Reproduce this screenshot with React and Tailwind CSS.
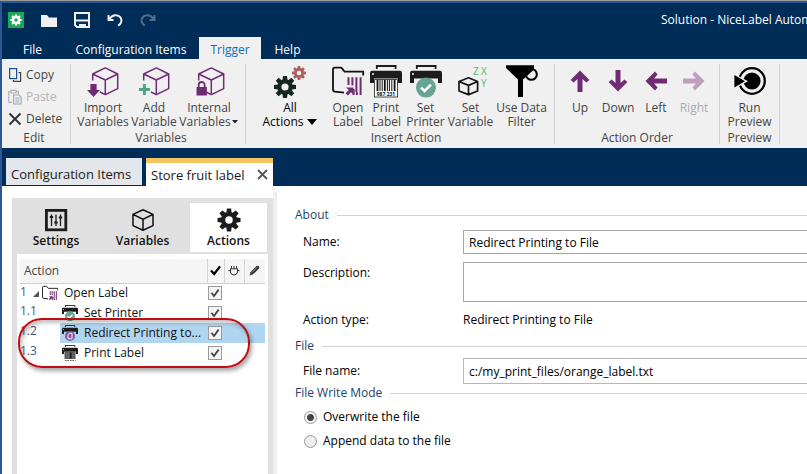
import { useState } from 'react';

const PURPLE = '#6f2c74';

/* ---------- Icons ---------- */

function Gear({ cx, cy, r, color, hole = '#f0f0f0' }) {
  return (
    <g transform={`translate(${cx} ${cy}) scale(${r / 12})`}>
      {[0, 45, 90, 135, 180, 225, 270, 315].map((angle) => (
        <path key={angle} d="M-2.8 -7 L-2.2 -12 L2.2 -12 L2.8 -7 Z" fill={color} transform={`rotate(${angle})`} />
      ))}
      <circle r="8.4" fill={color} />
      <circle r="3.9" fill={hole} />
    </g>
  );
}

function RibbonSvg({ children }) {
  return (
    <svg width="32" height="32" viewBox="0 0 32 32" fill="none" className="shrink-0 overflow-visible">
      {children}
    </svg>
  );
}

function CutCube() {
  return (
    <path
      d="M5.7 15.5 V9 L18.3 2.9 L30.7 9 V23.6 L18.3 29.6 L13 27 M5.7 9 L18.3 15 L30.7 9 M18.3 15 V29.6"
      stroke={PURPLE}
      strokeWidth="1.5"
      strokeLinejoin="round"
    />
  );
}

function ImportIcon() {
  return (
    <RibbonSvg>
      <CutCube />
      <path d="M3.4 19 H9.6 V25 H13 L6.5 32 L0 25 H3.4 Z" fill={PURPLE} />
    </RibbonSvg>
  );
}

function AddIcon() {
  return (
    <RibbonSvg>
      <CutCube />
      <path d="M6.4 19 V30 M1 24.5 H12" stroke="#4da585" strokeWidth="3" />
    </RibbonSvg>
  );
}

function InternalIcon() {
  return (
    <RibbonSvg>
      <CutCube />
      <path d="M5.7 23 V20 a3 3 0 0 1 6 0 V23" stroke={PURPLE} strokeWidth="1.8" />
      <rect x="3.5" y="22" width="10.4" height="8.5" fill={PURPLE} />
    </RibbonSvg>
  );
}

function AllActionsIcon() {
  return (
    <RibbonSvg>
      <Gear cx={11} cy={22} r={11} color="#14261f" />
      <Gear cx={25} cy={8} r={7} color="#ad5f60" />
    </RibbonSvg>
  );
}

function OpenLabelArt() {
  return (
    <>
      <path
        d="M12 27.6 L2.8 26.6 Q1 26.4 1 24.5 V4.6 Q1 2.7 3 2.7 H8.6 Q9.6 2.7 10.2 3.6 L12.6 6.7 H31.2 V10.5"
        stroke="#111"
        strokeWidth="1.8"
      />
      <path d="M16.5 12.3 V20 M20.4 12.3 V20.5 M24.4 12.3 V27 M28.6 12.3 V30 M21.6 24 V30 M24.8 27 V30" stroke={PURPLE} strokeWidth="2" />
      <path d="M14 22.4 H21.4 V29.6 L19 27.2 L15.8 30.4 L13.6 28.2 L16.8 25 Z" fill={PURPLE} />
    </>
  );
}

function PrinterBody() {
  return (
    <>
      <path d="M6.8 4 V1 H25.6 V4" stroke="#1c1c1c" strokeWidth="1.8" />
      <path d="M2 5.7 H30 Q32 5.7 32 8 V18 H28 V13.6 H4 V18 H0 V8 Q0 5.7 2 5.7 Z" fill="#1c1c1c" />
      <circle cx="3" cy="9" r="1" fill="#f0f0f0" />
    </>
  );
}

function BarcodeArt() {
  return (
    <>
      <rect x="4.6" y="14.6" width="22.8" height="17.4" fill="#fff" stroke="#1c1c1c" strokeWidth="0.8" />
      <path d="M7.5 15 V26 M14.8 15 V26 M24.6 15 V26" stroke="#111" strokeWidth="1.8" />
      <path d="M10 15 V26 M12.2 15 V26 M17.4 15 V26 M19.4 15 V26 M21.8 15 V26" stroke="#111" strokeWidth="1" />
    </>
  );
}

function PrintLabelIcon() {
  return (
    <RibbonSvg>
      <PrinterBody />
      <BarcodeArt />
      <text x="16" y="31" textAnchor="middle" fontSize="5" fontWeight="700" fill="#111">987 231</text>
    </RibbonSvg>
  );
}

function SetPrinterArt() {
  return (
    <>
      <PrinterBody />
      <circle cx="16" cy="22.6" r="10" fill="#66a593" />
      <path d="M11 22.6 L14.6 26 L21 19.6" stroke="#fff" strokeWidth="2.6" />
    </>
  );
}

function SetVariableIcon() {
  return (
    <RibbonSvg>
      <path
        d="M4 16.5 L13.5 12.8 L22.6 16.5 V26 L13.5 29.6 L4 26 Z M4 16.5 L13.5 20.4 L22.6 16.5 M13.5 20.4 V29.6"
        stroke="#161616"
        strokeWidth="1.7"
        strokeLinejoin="round"
      />
      <g fill="#56b56c" fontSize="10">
        <text x="18" y="10">Z</text>
        <text x="26" y="10">X</text>
        <text x="26" y="22">Y</text>
      </g>
    </RibbonSvg>
  );
}

function FilterIcon() {
  return (
    <RibbonSvg>
      <path d="M0 0.3 H28 V4.6 L17 14.6 V32 H12 V14.6 L0 3 Z" fill="#000" />
      <circle cx="25.4" cy="9.4" r="5.4" stroke="#000" strokeWidth="2" />
    </RibbonSvg>
  );
}

function ArrowIcon({ angle }) {
  return (
    <RibbonSvg>
      <g transform={`rotate(${angle} 16 16)`}>
        <path d="M16 5.5 L25.4 15 L22.4 17.6 L18.5 14 V27 H13.5 V14 L9.6 17.6 L6.6 15 Z" fill={PURPLE} />
      </g>
    </RibbonSvg>
  );
}

function RunIcon() {
  return (
    <RibbonSvg>
      <circle cx="18" cy="16" r="12.8" stroke="#000" strokeWidth="2.2" />
      <circle cx="18" cy="16" r="8.6" fill="#000" />
      <path d="M-1 8 L14 16.3 L-1 24.6 Z" fill="#f0f0f0" />
      <path d="M0.4 10 L11 16.3 L0.4 22.6 Z" fill="#000" />
    </RibbonSvg>
  );
}

function CubeIcon() {
  return (
    <svg width="24" height="24" viewBox="0 0 24 24" fill="none">
      <path
        d="M12 1.8 L22 6.4 V17.6 L12 22.2 L2 17.6 V6.4 Z M2 6.4 L12 11.2 L22 6.4 M12 11.2 V22.2"
        stroke="#111"
        strokeWidth="1.5"
        strokeLinejoin="round"
      />
    </svg>
  );
}

function SlidersIcon() {
  return (
    <svg width="24" height="24" viewBox="0 0 24 24" fill="none" stroke="#1c1c1c">
      <rect x="2.4" y="2.4" width="19.4" height="19.4" strokeWidth="2.8" />
      <path d="M7.5 6.5 V18 M12 6.5 V18 M16.5 6.5 V18" strokeWidth="1.3" />
      <path d="M5.8 9 H9.2 M10.3 14.5 H13.7 M14.8 9.5 H18.2" strokeWidth="2" />
    </svg>
  );
}

function GearIcon() {
  return (
    <svg width="24" height="24" viewBox="0 0 24 24">
      <Gear cx={12} cy={12} r={11.5} color="#1c1c1c" hole="#fff" />
    </svg>
  );
}

function SmallIcon({ kind }) {
  return (
    <svg width="16" height="16" viewBox="0 0 32 32" fill="none" className="shrink-0">
      {kind === 'open' && <OpenLabelArt />}
      {kind === 'set' && <SetPrinterArt />}
      {kind === 'redirect' && (
        <>
          <PrinterBody />
          <circle cx="16" cy="22" r="10" fill="#84509c" />
          <path d="M12 27.5 V19 L15 16.5 H20 V27.5 Z" stroke="#fff" strokeWidth="2" />
        </>
      )}
      {kind === 'print' && (
        <>
          <PrinterBody />
          <rect x="5" y="13" width="22" height="15" fill="#555" />
          <path d="M9 15 V27 M13 15 V27 M22 15 V27" stroke="#777" strokeWidth="1.6" />
          <path d="M17.5 15 V27" stroke="#111" strokeWidth="2.4" />
          <path d="M6 31 H27" stroke="#555" strokeWidth="2" strokeDasharray="3 2" />
        </>
      )}
    </svg>
  );
}

/* ---------- Title bar ---------- */

const quickActions = [
  { label: 'Open', icon: <path d="M0 3 H6 L8 5.5 H16 V15 H0 Z" fill="#f0f0f0" /> },
  {
    label: 'Save',
    icon: (
      <>
        <path d="M1 1 H15 V15 H3 L1 13 Z" stroke="#f0f0f0" strokeWidth="2" />
        <path d="M1 8.5 H15" stroke="#f0f0f0" strokeWidth="2" />
        <path d="M5 15 V12 H12 V15 Z" fill="#f0f0f0" />
      </>
    ),
  },
  { label: 'Undo', icon: <path d="M1.5 3 V8 H6.5 M2 7.6 C5 2.5 11 2 13.4 5.4 C15.6 8.6 14 12 11 13.6" stroke="#f0f0f0" strokeWidth="2" /> },
  { label: 'Redo', disabled: true, icon: <path d="M14.5 3 V8 H9.5 M14 7.6 C11 2.5 5 2 2.6 5.4 C0.4 8.6 2 12 5 13.6" stroke="#4f6d8c" strokeWidth="2" /> },
];

function TitleBar() {
  return (
    <div className="flex h-[34px] items-center gap-[17px] pl-1.5 text-white">
      <svg width="16" height="16" viewBox="0 0 16 16" className="shrink-0">
        <rect width="16" height="16" fill="#1da75c" />
        <Gear cx={8} cy={8} r={5.6} color="#fff" hole="#1da75c" />
      </svg>
      {quickActions.map((action) => (
        <button key={action.label} aria-label={action.label} disabled={action.disabled} className="shrink-0">
          <svg width="16" height="16" viewBox="0 0 16 16" fill="none">{action.icon}</svg>
        </button>
      ))}
      <div className="ml-auto w-[146px] shrink-0 overflow-hidden whitespace-nowrap">Solution - NiceLabel Autom</div>
    </div>
  );
}

function MenuTabs() {
  return (
    <nav className="flex h-[22px] items-stretch text-white">
      <button className="w-[61px] pt-1">File</button>
      <button className="w-[136px] pt-1">Configuration Items</button>
      <button className="w-[62px] bg-[#f0f0f0] pt-1 text-[#0f6cbd]">Trigger</button>
      <button className="w-[53px] pt-1">Help</button>
    </nav>
  );
}

/* ---------- Ribbon ---------- */

function RibbonGroup({ title, className, children }) {
  return (
    <div className={`flex shrink-0 flex-col justify-between border-r border-[#d2d2d2] ${className}`}>
      <div className="flex pt-px">{children}</div>
      <div className="text-center leading-3">{title}</div>
    </div>
  );
}

function RibbonButton({ icon, lines, width, caret, disabled, className = '' }) {
  return (
    <button disabled={disabled} className={`flex flex-col items-center whitespace-nowrap leading-[14px] ${width} ${disabled ? 'opacity-40' : ''} ${className}`}>
      {icon}
      <span className="mt-1">{lines[0]}</span>
      {lines[1] && (
        <span className="flex items-center">
          {lines[1]}
          {caret}
        </span>
      )}
    </button>
  );
}

function Ribbon() {
  return (
    <div className="flex h-[89px] items-stretch overflow-hidden bg-[#f0f0f0] pt-[5px] pb-1 text-[#444]">
      <div className="flex w-[69px] shrink-0 flex-col justify-between border-r border-[#d2d2d2]">
        <div className="flex flex-col pl-1.5">
          <button className="flex h-[22px] items-center gap-1">
            <svg width="14" height="16" viewBox="0 0 14 16" fill="none" strokeWidth="1.2">
              <rect x="1.6" y="1.6" width="7" height="10" stroke="#1d4e89" />
              <path d="M10.5 5.6 H12.6 V14.4 H5.4 V13" stroke="#444" />
            </svg>
            Copy
          </button>
          <button disabled className="flex h-[22px] items-center gap-1 text-[#b4b4b4]">
            <svg width="14" height="16" viewBox="0 0 14 16" fill="none" strokeWidth="1.1">
              <path d="M4 13.4 H0.8 V2.6 H3 M8 2.6 H10.4 V5 M3 1.4 H8 V4 H3 Z" stroke="#b0b0b0" />
              <path d="M5.6 6 H11 L13.2 8.2 V15 H5.6 Z M7.4 9 H11.4 M7.4 11 H11.4 M7.4 13 H11.4" stroke="#93a9bd" />
            </svg>
            Paste
          </button>
          <button className="flex h-[22px] items-center gap-1">
            <svg width="14" height="16" viewBox="0 0 14 16" fill="none">
              <path d="M1.5 2.5 L12.5 13.5 M12.5 2.5 L1.5 13.5" stroke="#333" strokeWidth="1.9" />
            </svg>
            Delete
          </button>
        </div>
        <div className="pr-1 text-center leading-3">Edit</div>
      </div>

      <RibbonGroup title="Variables" className="w-[175px] pl-1.5">
        <RibbonButton icon={<ImportIcon />} lines={['Import', 'Variables']} width="w-[52px]" />
        <RibbonButton icon={<AddIcon />} lines={['Add', 'Variable']} width="w-[50px]" />
        <RibbonButton
          icon={<InternalIcon />}
          lines={['Internal', 'Variables']}
          width="w-[60px]"
          caret={<svg width="7" height="4" viewBox="0 0 7 4" className="ml-px"><path d="M0 0 H6 L3 3.4 Z" fill="#222" /></svg>}
        />
      </RibbonGroup>

      <RibbonGroup title="Insert Action" className="w-[309px] pl-3">
        <RibbonButton
          icon={<AllActionsIcon />}
          lines={['All', 'Actions']}
          width="w-[64px]"
          className="mr-[7px] text-black"
          caret={<svg width="10" height="6" viewBox="0 0 10 6" className="ml-1"><path d="M0 0 H10 L5 6 Z" fill="#000" /></svg>}
        />
        <RibbonButton icon={<RibbonSvg><OpenLabelArt /></RibbonSvg>} lines={['Open', 'Label']} width="w-[38px]" />
        <RibbonButton icon={<PrintLabelIcon />} lines={['Print', 'Label']} width="w-[38px]" />
        <RibbonButton icon={<RibbonSvg><SetPrinterArt /></RibbonSvg>} lines={['Set', 'Printer']} width="w-[41px]" />
        <RibbonButton icon={<SetVariableIcon />} lines={['Set', 'Variable']} width="w-[49px]" />
        <RibbonButton icon={<FilterIcon />} lines={['Use Data', 'Filter']} width="w-[53px]" />
      </RibbonGroup>

      <RibbonGroup title="Action Order" className="w-[165px] px-1.5">
        <RibbonButton icon={<ArrowIcon angle={0} />} lines={['Up']} width="w-[38px]" />
        <RibbonButton icon={<ArrowIcon angle={180} />} lines={['Down']} width="w-[38px]" />
        <RibbonButton icon={<ArrowIcon angle={270} />} lines={['Left']} width="w-[38px]" />
        <RibbonButton icon={<ArrowIcon angle={90} />} lines={['Right']} width="w-[38px]" disabled />
      </RibbonGroup>

      <RibbonGroup title="Preview" className="w-[60px]">
        <RibbonButton icon={<RunIcon />} lines={['Run', 'Preview']} width="w-full" />
      </RibbonGroup>
    </div>
  );
}

/* ---------- Document tabs ---------- */

function DocumentTabs() {
  return (
    <div className="flex h-[38px] items-end gap-1 pl-1 text-[13px] text-[#1a1a1a]">
      <button className="mb-px h-[27px] w-[136px] whitespace-nowrap bg-[#e3e7eb] px-[5px] pt-1 text-left">Configuration Items</button>
      <div className="flex h-[28px] w-[127px] items-center justify-between whitespace-nowrap border-t-[5px] border-[#f5c564] bg-white px-[5px]">
        <button>Store fruit label</button>
        <button aria-label="Close">
          <svg width="11" height="11" viewBox="0 0 11 11">
            <path d="M1 1 L10 10 M10 1 L1 10" stroke="#555" strokeWidth="1.8" />
          </svg>
        </button>
      </div>
    </div>
  );
}

/* ---------- Action tree ---------- */

const actions = [
  { id: '1', name: 'Open Label', icon: 'open', root: true },
  { id: '1.1', name: 'Set Printer', icon: 'set' },
  { id: '1.2', name: 'Redirect Printing to...', icon: 'redirect' },
  { id: '1.3', name: 'Print Label', icon: 'print' },
];

function CheckBox({ label }) {
  return (
    <span className="grid size-[14px] place-items-center">
      <input
        type="checkbox"
        defaultChecked
        aria-label={label}
        className="peer col-start-1 row-start-1 size-[14px] appearance-none border border-[#9a9a9a] bg-[#f4f4f4]"
      />
      <svg width="10" height="10" viewBox="0 0 10 10" fill="none" className="pointer-events-none invisible col-start-1 row-start-1 peer-checked:visible">
        <path d="M1.4 4.8 L4 8 L8.6 1.6" stroke="#444" strokeWidth="1.8" />
      </svg>
    </span>
  );
}

function ActionTree() {
  const [selected, setSelected] = useState('1.2');

  return (
    <div className="relative flex-1 bg-white px-[3px] pt-[5px]">
      <table className="w-full table-fixed border-collapse">
        <colgroup>
          <col className="w-[40px]" />
          <col />
          <col className="w-[17px]" />
          <col className="w-[20px]" />
          <col className="w-[21px]" />
        </colgroup>
        <thead>
          <tr className="h-6 border-b border-[#cfcfcf] bg-[#f5f5f5] text-left text-[#444]">
            <th colSpan={2} className="pl-1 font-normal">Action</th>
            <th className="border-l border-[#d5d5d5]">
              <svg width="11" height="11" viewBox="0 0 11 11" fill="none" className="mx-auto">
                <path d="M1 5.5 L4.2 9 L10 1.4" stroke="#000" strokeWidth="2.3" />
              </svg>
            </th>
            <th className="border-l border-[#d5d5d5]">
              <svg width="12" height="12" viewBox="0 0 12 12" fill="none" stroke="#333" className="mx-auto">
                <path d="M2.5 3.8 H9.5 V7 Q9 10 6 10 Q3 10 2.5 7 Z M0.4 5.6 H2.5 M9.5 5.6 H11.6 M3.5 1 V3.8 M6 1 V3.8 M8.5 1 V3.8" />
              </svg>
            </th>
            <th className="border-l border-[#d5d5d5]">
              <svg width="11" height="11" viewBox="0 0 11 11" className="mx-auto">
                <path d="M0.6 10.4 L1.4 7.2 L7.6 1 Q8.6 0.2 9.8 1.2 Q10.8 2.4 10 3.4 L3.8 9.6 Z" fill="#333" />
                <path d="M2.8 7.6 L8 2.4 M1.6 8.4 L2.6 9.4" stroke="#bbb" strokeWidth="0.7" />
              </svg>
            </th>
          </tr>
        </thead>
        <tbody>
          {actions.map((action) => {
            const highlight = selected === action.id ? 'bg-[#afd5f0]' : '';
            return (
              <tr key={action.id} className="h-5 cursor-default" onClick={() => setSelected(action.id)}>
                <td className="align-top leading-4 text-[#4c5a73]">
                  <div className="flex items-center justify-between">
                    {action.id}
                    {action.root && (
                      <svg width="6" height="6" viewBox="0 0 6 6" className="mt-1 mr-[21px]">
                        <path d="M6 0 V6 H0 Z" fill="#555" />
                      </svg>
                    )}
                  </div>
                </td>
                <td className={highlight}>
                  <div className={`flex items-center gap-1.5 whitespace-nowrap text-[#111] ${action.root ? '-ml-[18px]' : 'pl-0.5'}`}>
                    <SmallIcon kind={action.icon} />
                    {action.name}
                  </div>
                </td>
                <td className={`pl-px ${highlight}`}><CheckBox label={action.name} /></td>
                <td colSpan={2} className={highlight} />
              </tr>
            );
          })}
        </tbody>
      </table>

      {/* Callout around the redirect and print steps */}
      <div className="pointer-events-none absolute top-16 left-px h-[50px] w-[232px] rounded-[24px] border-2 border-[#c00d12] shadow-[2px_3px_4px_rgba(0,0,0,0.35),inset_2px_3px_4px_rgba(0,0,0,0.25)]" />
    </div>
  );
}

const panelTabs = [
  { label: 'Settings', icon: <SlidersIcon />, className: 'w-[78px]' },
  { label: 'Variables', icon: <CubeIcon />, className: 'w-[95px]' },
  { label: 'Actions', icon: <GearIcon />, className: 'w-[77px] bg-white' },
];

function SidePanel() {
  return (
    <aside className="mt-3 ml-2.5 flex w-[261px] shrink-0 flex-col bg-[#e0e0e0] px-[5px] pt-[5px]">
      <div className="mb-0.5 flex">
        {panelTabs.map((tab) => (
          <button key={tab.label} className={`flex h-[49px] flex-col items-center pt-[5px] font-semibold text-[#111] ${tab.className}`}>
            {tab.icon}
            <span className="leading-[18px]">{tab.label}</span>
          </button>
        ))}
      </div>
      <ActionTree />
    </aside>
  );
}

/* ---------- Properties form ---------- */

function SectionTitle({ children }) {
  return (
    <div className="flex h-[18px] items-center gap-2 text-[#1f4268]">
      <h2>{children}</h2>
      <div className="h-px flex-1 bg-[#d2d2d2]" />
    </div>
  );
}

function WriteMode({ label, checked }) {
  return (
    <label className="flex h-6 items-center gap-1.5">
      <input
        type="radio"
        name="writeMode"
        defaultChecked={checked}
        className="size-[13px] appearance-none rounded-full border border-[#999] bg-[#eee] checked:bg-[radial-gradient(circle,#444_0_3px,#f6f6f6_4px)]"
      />
      {label}
    </label>
  );
}

function PropertiesForm() {
  return (
    <form className="min-w-0 flex-1 pt-5 pl-[18px] text-black">
      <SectionTitle>About</SectionTitle>
      <div className="mt-1.5 flex items-center pl-2">
        <label htmlFor="name" className="w-40 shrink-0">Name:</label>
        <input id="name" defaultValue="Redirect Printing to File" className="h-6 min-w-0 flex-1 border border-r-0 border-[#a6a6a6] px-[5px]" />
      </div>
      <div className="mt-2 flex pl-2">
        <label htmlFor="description" className="w-40 shrink-0 leading-[22px]">Description:</label>
        <textarea id="description" className="h-10 min-w-0 flex-1 resize-none border border-r-0 border-[#a6a6a6] px-[5px]" />
      </div>
      <div className="mt-2 flex h-5 items-center pl-2">
        <span className="w-40 shrink-0">Action type:</span>
        <span>Redirect Printing to File</span>
      </div>
      <div className="mt-[7px]">
        <SectionTitle>File</SectionTitle>
      </div>
      <div className="mt-[3px] flex items-center pl-2">
        <label htmlFor="fileName" className="w-40 shrink-0">File name:</label>
        <input id="fileName" defaultValue="c:/my_print_files/orange_label.txt" className="h-[26px] min-w-0 flex-1 border border-r-0 border-[#b8b8b8] px-[5px]" />
      </div>
      <SectionTitle>File Write Mode</SectionTitle>
      <div className="flex flex-col pt-[3px] pl-[9px]">
        <WriteMode label="Overwrite the file" checked />
        <WriteMode label="Append data to the file" />
      </div>
    </form>
  );
}

function App() {
  return (
    <div className="flex min-h-screen flex-col overflow-hidden border-t border-[#999] bg-[#2b5797] pt-0.5 pl-0.5 font-['Open_Sans','Noto_Sans',sans-serif] text-[12px] leading-4">
      <header className="bg-[#002c58]">
        <TitleBar />
        <MenuTabs />
        <Ribbon />
        <DocumentTabs />
      </header>
      <main className="flex flex-1 bg-white">
        <SidePanel />
        <div className="mt-1.5 w-1 shrink-0 bg-[#eee]" />
        <PropertiesForm />
      </main>
    </div>
  );
}

export default App;
